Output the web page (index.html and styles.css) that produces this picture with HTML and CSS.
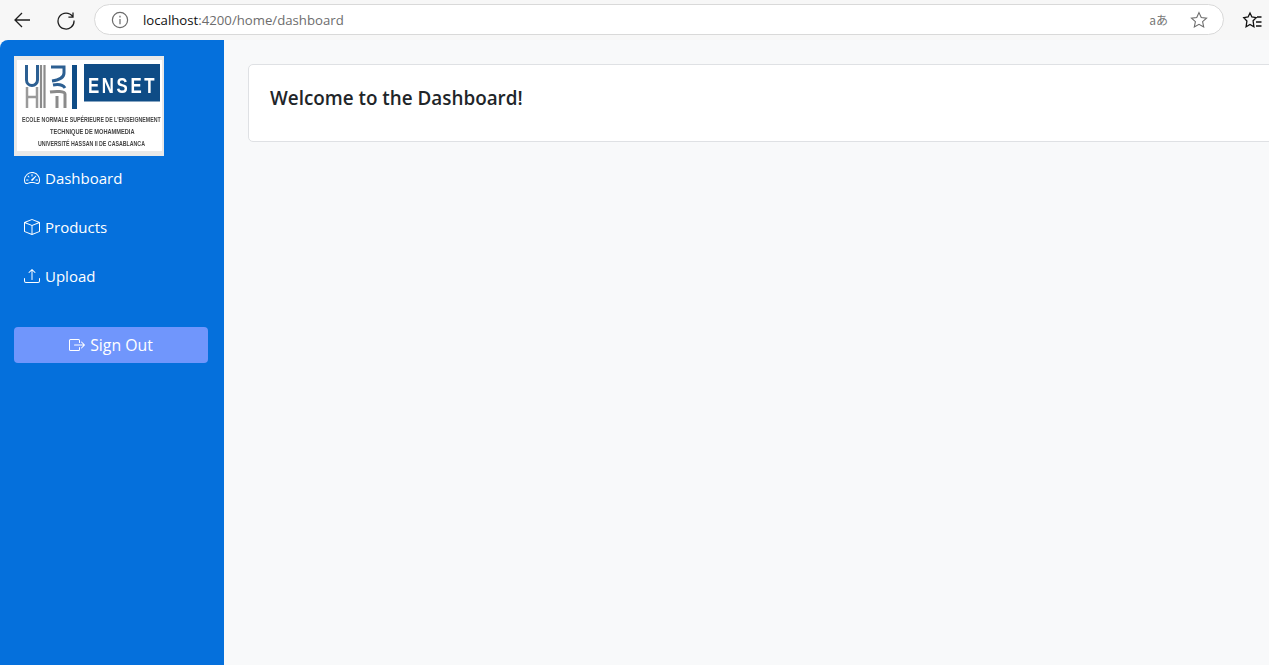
FILE: index.html
```html
<!DOCTYPE html>
<html>
<head>
	<title>Dashboard</title>
	<link rel="stylesheet" href="styles.css">
</head>
<body>
	<div class="toolbar">
		<svg class="tool-btn back" viewBox="0 0 20 20"><path d="M18 10H3M10 3l-7 7 7 7"/></svg>
		<svg class="tool-btn reload" viewBox="0 0 20 20"><path d="M16.6 6.5A8 8 0 1 0 18 10.5M17 2.5v4.6h-4.6"/></svg>
		<div class="address">
			<svg class="info" viewBox="0 0 18 18"><circle cx="9" cy="9" r="7.6"/><path d="M9 8v5.2M9 4.800v1.600"/></svg>
			<span class="url"><span class="host">localhost</span>:4200/home/dashboard</span>
			<span class="translate">aあ</span>
			<svg class="star" viewBox="0 0 20 20"><path d="M10 1.800l2.500 5.400 5.900.7-4.400 4 1.200 5.800-5.200-2.900-5.200 2.900 1.200-5.800-4.400-4 5.900-.7z"/></svg>
		</div>
		<svg class="favs" viewBox="0 0 20 20"><path d="M8 3l1.900 4 4.300.6-3.100 3.200.8 6L8 14.400l-3.900 2.400.8-5.800-3.100-3.400 4.300-.6zM15 7h4.500M14 12h5.500M14 16h5.500"/></svg>
	</div>

	<div class="app">
		<div class="sidebar">
			<svg class="logo" viewBox="0 0 150 100">
				<rect width="150" height="100" fill="#e9e9e9"/>
				<rect x="3" y="4" width="145" height="91" fill="#fff"/>
				<path d="M13 52V31M23 52V31M13 41h10" fill="none" stroke="#9a9a9a" stroke-width="2.500"/>
				<path d="M12.500 9v15a5.500 5.500 0 0 0 11 0V9" fill="none" stroke="#2c5f92" stroke-width="3"/>
				<path d="M27 9v43M30.500 9v43" stroke="#8b8b8b" stroke-width="2.200"/>
				<path d="M37 11h13v6c0 4-5 7-12 8M39 29c5-1 10 0 12 3" fill="none" stroke="#2c5f92" stroke-width="3"/>
				<path d="M36 36c6-1 15-1 15 2v14M43 40v12" fill="none" stroke="#8b8b8b" stroke-width="3"/>
				<rect x="58" y="9" width="5" height="44" fill="#0f4c86"/>
				<rect x="70" y="8" width="76" height="37.500" fill="#0f4c86"/>
				<text class="logo-name" transform="translate(74 37) scale(.75 1)">ENSET</text>
				<text class="logo-line" transform="translate(8 65.500) scale(.753 1)">ECOLE NORMALE SUPÉRIEURE DE L'ENSEIGNEMENT</text>
				<text class="logo-line" transform="translate(36 77.500) scale(.808 1)">TECHNIQUE DE MOHAMMEDIA</text>
				<text class="logo-line" transform="translate(24 90) scale(.752 1)">UNIVERSITÉ HASSAN II DE CASABLANCA</text>
			</svg>

			<a class="nav-link">
				<svg class="icon" viewBox="0 0 16 16"><path d="M8 4a.5.5 0 0 1 .5.5V6a.5.5 0 0 1-1 0V4.500A.5.5 0 0 1 8 4M3.732 5.732a.5.5 0 0 1 .707 0l.915.914a.5.5 0 1 1-.708.708l-.914-.915a.5.5 0 0 1 0-.707M2 10a.5.5 0 0 1 .5-.5h1.586a.5.5 0 0 1 0 1H2.500A.5.5 0 0 1 2 10m9.500 0a.5.5 0 0 1 .5-.5h1.500a.5.5 0 0 1 0 1H12a.5.5 0 0 1-.5-.5m.754-4.246a.39.39 0 0 0-.527-.02L7.547 9.310a.91.91 0 1 0 1.302 1.258l3.434-4.297a.39.39 0 0 0-.029-.518z"/><path fill-rule="evenodd" d="M0 10a8 8 0 1 1 15.547 2.661c-.442 1.253-1.845 1.602-2.932 1.250C11.309 13.488 9.475 13 8 13c-1.474 0-3.310.488-4.615.911-1.087.352-2.490.003-2.932-1.250A8 8 0 0 1 0 10m8-7a7 7 0 0 0-6.603 9.329c.203.575.923.876 1.680.630C4.397 12.533 6.358 12 8 12s3.604.532 4.923.960c.757.245 1.477-.056 1.680-.631A7 7 0 0 0 8 3"/></svg>
				Dashboard
			</a>
			<a class="nav-link">
				<svg class="icon" viewBox="0 0 16 16"><path d="M8.186 1.113a.5.5 0 0 0-.372 0L1.846 3.500 8 5.961 14.154 3.500zM15 4.239l-6.500 2.600v7.922l6.500-2.600V4.240zM7.500 14.762V6.838L1 4.239v7.925zM7.443.184a1.500 1.500 0 0 1 1.114 0l7.129 2.852A.5.5 0 0 1 16 3.500v8.662a1 1 0 0 1-.629.928l-7.185 2.874a.5.5 0 0 1-.372 0L.630 13.090a1 1 0 0 1-.630-.928V3.500a.5.5 0 0 1 .314-.464z"/></svg>
				Products
			</a>
			<a class="nav-link">
				<svg class="icon" viewBox="0 0 16 16"><path d="M.5 9.900a.5.5 0 0 1 .5.5v2.500a1 1 0 0 0 1 1h12a1 1 0 0 0 1-1v-2.500a.5.5 0 0 1 1 0v2.500a2 2 0 0 1-2 2H2a2 2 0 0 1-2-2v-2.500a.5.5 0 0 1 .5-.5"/><path d="M7.646 1.146a.5.5 0 0 1 .708 0l3 3a.5.5 0 0 1-.708.708L8.500 2.707V11.500a.5.5 0 0 1-1 0V2.707L5.354 4.854a.5.5 0 1 1-.708-.708z"/></svg>
				Upload
			</a>

			<button class="signout">
				<svg class="icon" viewBox="0 0 16 16"><path d="M10 12.500a.5.5 0 0 1-.5.5h-8a.5.5 0 0 1-.5-.5v-9a.5.5 0 0 1 .5-.5h8a.5.5 0 0 1 .5.5v2a.5.5 0 0 0 1 0v-2A1.500 1.500 0 0 0 9.500 2h-8A1.500 1.500 0 0 0 0 3.500v9A1.500 1.500 0 0 0 1.500 14h8a1.500 1.500 0 0 0 1.500-1.500v-2a.5.5 0 0 0-1 0z"/><path d="M15.854 8.354a.5.5 0 0 0 0-.708l-3-3a.5.5 0 0 0-.708.708L14.293 7.500H5.500a.5.5 0 0 0 0 1h8.793l-2.147 2.146a.5.5 0 0 0 .708.708z"/></svg>
				Sign Out
			</button>
		</div>

		<div class="main">
			<div class="card">
				<h5 class="card-title">Welcome to the Dashboard!</h5>
			</div>
		</div>
	</div>
</body>
</html>
```

FILE: styles.css
```css
* {
	box-sizing: border-box;
}

html, body {
	height: 100%;
}

body {
	margin: 0;
	overflow: hidden;
	display: flex;
	flex-direction: column;
	font-family: "Open Sans", "Noto Sans", sans-serif;
	background: #f8f9fa;
}

/* browser bar */
.toolbar {
	height: 40px;
	flex: none;
	display: flex;
	align-items: center;
	background: #f7f7f7;
	padding: 0 0 1px 12px;
}

.tool-btn {
	width: 20px;
	height: 20px;
	fill: none;
	stroke: #1f1f1f;
	stroke-width: 1.3;
}

.back {
	margin-right: 24px;
}

.reload {
	margin-right: 18px;
}

.address {
	width: 1130px;
	height: 31px;
	display: flex;
	align-items: center;
	background: #fff;
	border: 1px solid #d9d9d9;
	border-radius: 16px;
	padding: 0 15px 0 16px;
}

.info {
	width: 18px;
	height: 18px;
	fill: none;
	stroke: #6b6b6b;
	stroke-width: 1.2;
	margin-right: 14px;
}

.url {
	font-size: 13.200px;
	color: #6d6d6d;
	flex: 1;
}

.host {
	color: #111;
}

.translate {
	font-size: 12px;
	color: #777;
	margin-right: 22px;
	font-family: "Noto Sans CJK JP", sans-serif;
}

.star {
	width: 18px;
	height: 18px;
	fill: none;
	stroke: #6b6b6b;
	stroke-width: 1.2;
}

.favs {
	width: 20px;
	height: 20px;
	margin-left: 18px;
	fill: none;
	stroke: #111;
	stroke-width: 1.3;
}

/* page */
.app {
	flex: 1;
	display: flex;
	min-height: 0;
}

.sidebar {
	width: 224px;
	flex: none;
	background: #0570dc;
	border-top-left-radius: 8px;
	padding: 16px 16px 0 14px;
}

.logo {
	display: block;
	width: 150px;
	height: 100px;
	filter: blur(0.5px);
}

.logo-name {
	font-family: "Liberation Sans", sans-serif;
	font-size: 22.400px;
	font-weight: 700;
	letter-spacing: 3.500px;
	fill: #fff;
}

.logo-line {
	font-family: "Liberation Sans", sans-serif;
	font-size: 7px;
	font-weight: 700;
	fill: #444;
}

.nav-link {
	height: 49px;
	display: flex;
	align-items: center;
	gap: 5px;
	padding: 0 0 5px 10px;
	color: #fff;
	font-size: 15px;
}

.icon {
	width: 16px;
	height: 16px;
	fill: currentColor;
	flex: none;
}

.signout {
	width: 194px;
	height: 36px;
	margin-top: 24px;
	display: flex;
	align-items: center;
	justify-content: center;
	gap: 5px;
	border: 0;
	border-radius: 4px;
	background: #7096fc;
	color: #fff;
	font-family: inherit;
	font-size: 15.800px;
}

.main {
	flex: 1;
	min-width: 0;
	overflow: hidden;
	padding: 24px 0 0 24px;
}

.card {
	height: 78px;
	margin-right: -24px;
	background: #fff;
	border: 1px solid #dfe1e4;
	border-radius: 5px;
	padding: 21px;
}

.card-title {
	margin: 0;
	font-size: 18.850px;
	font-weight: 600;
	line-height: 24px;
	color: #212529;
}
```
